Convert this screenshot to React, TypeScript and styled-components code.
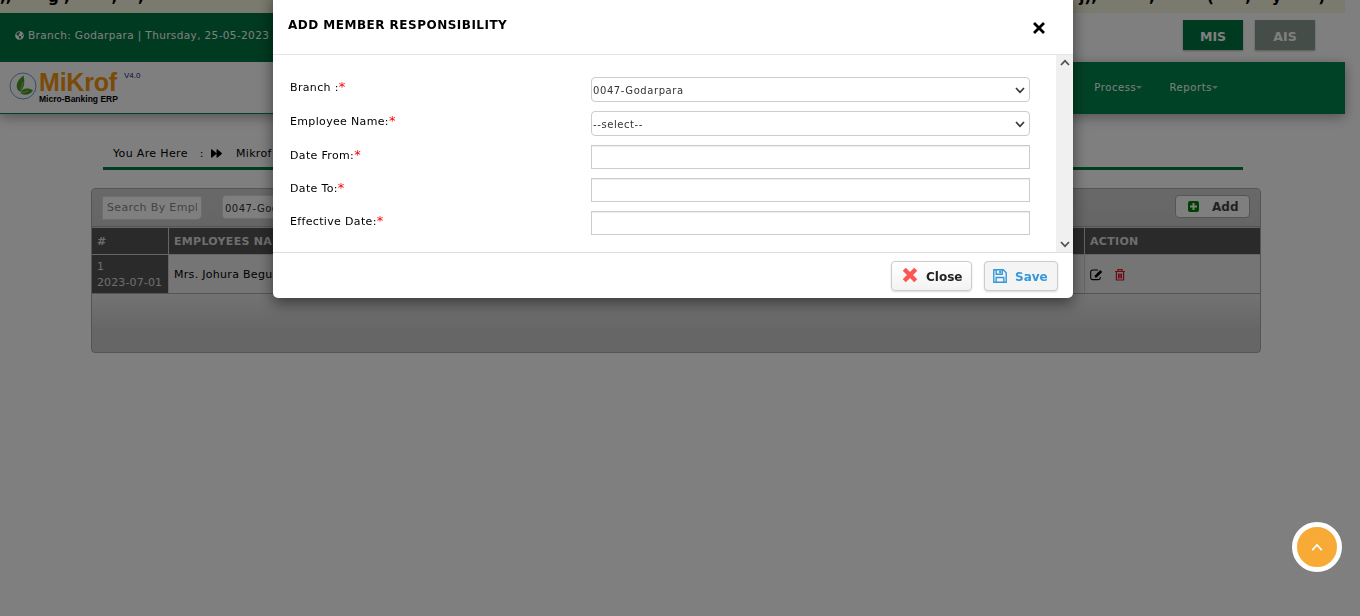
import React from "react";
import styled, { createGlobalStyle } from "styled-components";
import { FaGlobeAmericas, FaForward } from "react-icons/fa";

const Global = createGlobalStyle`
  * { box-sizing: border-box; }
  body { margin: 0; background: #fff; font-family: "DejaVu Sans", Verdana, sans-serif; font-size: 11px; color: #000; overflow: hidden; }
  button, input, select { font-family: inherit; }
`;

const Page = styled.div`height: 616px; padding-right: 15px; overflow: hidden;`;
const Notice = styled.div`
  height: 13px; background: #f5f5dc; overflow: hidden; display: flex; justify-content: space-between;
  font-size: 15px; font-weight: bold; line-height: 18px; white-space: nowrap;
`;
const NoticeText = styled.span<{ $gap?: number }>`
  margin-top: -12px; padding-right: ${p => p.$gap || 0}px; white-space: pre;
`;
const TopBar = styled.div`height: 49px; display: flex; justify-content: space-between;`;
const BranchBar = styled.div`
  width: 420px; background: #007440; color: #fff; display: flex; align-items: center; gap: 4px; padding: 0 0 5px 15px;
  font-size: 10.5px; letter-spacing: .37px; white-space: nowrap;
`;
const Modes = styled.div`display: flex; gap: 12px; padding: 7px 30px 0 0;`;
const Mode = styled.button<{ $muted?: boolean }>`
  width: 60px; height: 30px; padding: 3px 0 0; border: 0; color: #fff; font-size: 12.5px; font-weight: bold;
  background: ${p => (p.$muted ? "#8a9a92" : "#007440")}; box-shadow: 0 1px 2px rgba(0,0,0,.3);
`;
const Header = styled.header`height: 52px; display: flex; justify-content: space-between; border-bottom: 1px solid #008848; box-shadow: 0 3px 12px rgba(0,0,0,.35);`;
const Brand = styled.div`display: flex; padding: 10px 0 0 9px;`;
const BrandWords = styled.div`display: flex; flex-direction: column; gap: 2px; margin-left: 2px; font-family: "Liberation Sans", Arial, sans-serif; font-weight: bold;`;
const BrandName = styled.span`color: #f4940d; font-size: 25px; line-height: 20px; letter-spacing: -.2px; font-weight: bold;`;
const BrandTag = styled.span`font-size: 8.5px; line-height: 10px; white-space: nowrap;`;
const Version = styled.span`font-family: "Liberation Sans", Arial, sans-serif; color: #221a80; font-size: 8px; line-height: 8px; margin-left: 6px;`;
const Nav = styled.nav`
  width: 900px; height: 52px; background: #00844a; display: flex; justify-content: flex-end; align-items: center; gap: 27px; padding: 0 127px 2px 0; color: #fff; font-size: 10px; letter-spacing: .6px;
`;
const NavItem = styled.span`
  display: flex; align-items: center;
  &::after { content: ""; border: 3px solid transparent; border-top-color: #b5c7d8; border-bottom: 0; }
`;
const Crumbs = styled.div`
  margin: 30px 0 0 103px; width: 1140px; height: 26px; padding: 2px 10px 0; border-bottom: 3px solid #007c44;
  display: flex; align-items: flex-start; line-height: 15px; letter-spacing: .35px; white-space: nowrap;
  svg { margin: 2px 14px 0 7px; }
`;
const CrumbColon = styled.span`margin-left: 12px;`;
const Panel = styled.section`margin: 18px 0 0 91px; width: 1170px; height: 165px; border: 1px solid #aaa; border-radius: 4px; background: linear-gradient(#e4e4e4 66%, #ccc 87%); overflow: hidden;`;
const Tools = styled.div`
  height: 38px; background: linear-gradient(#d2d2d2, #cbcbcb); border-bottom: 1px solid #aaa; padding: 6px 10px 0; display: flex; gap: 20px;
`;
const Search = styled.input`
  width: 100px; height: 24px; margin-top: 1px; padding: 0 4px 2px; border: 1px solid #ddd; border-radius: 0 0 5px 0; background: #fff; font-size: 11px; letter-spacing: .35px;
  &::placeholder { color: #888; }
`;
const Filter = styled.div`width: 150px; height: 24px; background: #fff; border: 1px solid #ddd; border-radius: 4px; padding: 1px 2px; font-size: 10px; line-height: 24px; letter-spacing: .5px; color: #333;`;
const AddButton = styled.button`
  margin-left: auto; width: 75px; height: 23px; border: 1px solid #aaa; border-radius: 4px; background: #fff; color: #444; display: flex; align-items: center; gap: 13px; padding: 0 0 0 12px; font-size: 12px; font-weight: bold;
`;
const Grid = styled.div`display: grid; grid-template-columns: 76px 915px 1fr; grid-template-rows: 26px 38px; column-gap: 1px; row-gap: 1px; background: #ccc; border-bottom: 1px solid #aaa; border-top: 1px solid #ccc;`;
const HeadCell = styled.div`background: #555; color: #ddd; padding: 0 5px; font-weight: bold; font-size: 11px; line-height: 27px; letter-spacing: .3px;`;
const Cell = styled.div<{ $dark?: boolean }>`
  background: ${p => (p.$dark ? "#555" : "#ebebeb")}; color: ${p => (p.$dark ? "#ddd" : "#000")};
  padding: 1px 5px 0; display: flex; align-items: center; gap: 12px; line-height: 16px; white-space: nowrap;
  letter-spacing: ${p => (p.$dark ? ".12px" : ".3px")};
`;
const Shade = styled.div`position: fixed; inset: 0; background: rgba(0,0,0,.5);`;
const Dialog = styled.div`
  position: fixed; left: 273px; top: -10px; width: 800px; height: 308px; background: #fff; border-radius: 5px; box-shadow: 0 5px 15px rgba(0,0,0,.5); overflow: hidden;
`;
const DialogHead = styled.div`height: 65px; border-bottom: 1px solid #e5e5e5; padding: 24px 27px 0 15px; display: flex; justify-content: space-between;`;
const Title = styled.h4`margin: 3px 0 0; font-size: 12px; line-height: 16px; letter-spacing: .49px;`;
const Dismiss = styled.button`width: 14px; height: 14px; margin-top: 7px; border: 0; padding: 0; background: none; display: flex;`;
const DialogBody = styled.div`height: 197px; display: flex; justify-content: space-between;`;
const Form = styled.div`width: 757px; padding: 22px 0 0 17px; display: flex; flex-direction: column; gap: 9px;`;
const Row = styled.div`display: flex;`;
const Label = styled.label`width: 301px; line-height: 22px; letter-spacing: .34px; i { color: red; font-style: normal; font-size: 13px; line-height: 1; }`;
const Select = styled.div`
  width: 439px; height: 25px; border: 1px solid #ccc; border-radius: 4px; display: flex; align-items: center; justify-content: space-between; padding: 1px 4px 0 1px; color: #333; font-size: 10px; letter-spacing: .58px;
`;
const Input = styled.input`width: 439px; height: 24px; border: 1px solid #ccc; box-shadow: inset 0 1px 1px rgba(0,0,0,.075);`;
const Scroll = styled.div`width: 17px; background: #f0f0f0; display: flex; flex-direction: column; align-items: center; justify-content: space-between; padding: 4px 0;`;
const DialogFoot = styled.div`height: 46px; border-top: 1px solid #ddd; display: flex; justify-content: flex-end; gap: 12px; padding: 8px 15px 0;`;
const FootButton = styled.button<{ $save?: boolean }>`
  width: ${p => (p.$save ? 74 : 81)}px; height: 30px; border: 1px solid #ccc; border-radius: 4px; box-shadow: 0 1px 2px rgba(0,0,0,.15);
  background: ${p => (p.$save ? "#f4f4f4" : "linear-gradient(#fff, #f3f3f3)")}; color: ${p => (p.$save ? "#3498db" : "#222")};
  display: flex; align-items: center; gap: 8px; padding: ${p => (p.$save ? "0 0 0 8px" : "0 0 0 10px")}; font-size: 12px; font-weight: bold;
  svg { margin-top: ${p => (p.$save ? "0" : "-3px")}; }
  span { margin-top: ${p => (p.$save ? "2px" : "1px")}; }
`;
const ToTop = styled.button`
  position: fixed; left: 1292px; top: 522px; width: 50px; height: 50px; border: 5px solid #fff; border-radius: 50%; background: #f7ab36; padding: 0; display: grid; place-items: center;
`;

const Chevron = ({ up, color = "#333", size = 10, stroke = 1.6 }: { up?: boolean; color?: string; size?: number; stroke?: number }) => (
  <svg width={size} height={size * 0.7} viewBox="0 0 10 7" fill="none" stroke={color} strokeWidth={stroke}>
    <path d={up ? "M1 6 5 1.7 9 6" : "M1 1 5 5.3 9 1"} />
  </svg>
);
const Leaf = () => (
  <svg width="28" height="28" viewBox="0 0 28 28">
    <circle cx="14" cy="14" r="13" fill="#fff" stroke="#6aa2c8" />
    <path d="M11.5 20C5.5 17 6.500 9 14.500 3.500 16 10 15.500 15 11.500 20Z" fill="#4b9b28" />
    <path d="M11.500 21.500c1-5 7-6.500 12.500-3-3.500 5-8 5-12.500 3Z" fill="#4b9b28" />
    <path d="m11.500 20 2.500-10M12 21l7-2" stroke="#c4dfae" strokeWidth=".6" fill="none" />
  </svg>
);
const Plus = () => (
  <svg width="11" height="11" viewBox="0 0 11 11">
    <rect width="11" height="11" rx="2" fill="#008000" />
    <path d="M5.5 2v7M2 5.5h7" stroke="#fff" strokeWidth="2" />
  </svg>
);
const Edit = () => (
  <svg width="13" height="12" viewBox="0 0 13 12" fill="none" stroke="#000">
    <path d="M8 1H2.5A1.8 1.8 0 0 0 .7 2.800v6a1.8 1.8 0 0 0 1.8 1.800h6a1.8 1.8 0 0 0 1.800-1.800V8" strokeWidth="1.100" />
    <path d="M4.800 8.600V6.500L10.300.900l2 2-5.600 5.700Z" fill="#000" stroke="none" />
  </svg>
);
const Trash = () => (
  <svg width="10" height="12" viewBox="0 0 10 12" fill="none" stroke="#dc1428" strokeWidth="1.2">
    <path d="M0 2.500h10M3 2.500V.700h4v1.800M1.400 2.500v8.500h7.200V2.500M3.500 4.500v5M5 4.500v5M6.500 4.500v5" />
  </svg>
);
const Cross = ({ color, size, stroke }: { color: string; size: number; stroke: number }) => (
  <svg width={size} height={size} viewBox="0 0 14 14" stroke={color} strokeWidth={stroke}>
    <path d="m2 2 10 10M12 2 2 12" />
  </svg>
);
const Disk = () => (
  <svg width="14" height="14" viewBox="0 0 14 14" fill="none" stroke="#3498db" strokeWidth="1.4">
    <path d="M.8.8h9.400l3 3v9.400H.8ZM3.200 13V8.500h7.600V13M3.200 1v4.200h6V1" />
    <path d="M6.200 1.500h1.700v2.800H6.200Z" fill="#3498db" stroke="none" />
  </svg>
);

export default function App() {
  return (
    <>
      <Global />
      <Page>
        <Notice>
          <NoticeText>{",,       g ,        ,    ,"}</NoticeText>
          <NoticeText $gap={20}>{"j),          ,          (      ,    y       )"}</NoticeText>
        </Notice>
        <TopBar>
          <BranchBar><FaGlobeAmericas size={9} />Branch: Godarpara | Thursday, 25-05-2023</BranchBar>
          <Modes><Mode>MIS</Mode><Mode $muted>AIS</Mode></Modes>
        </TopBar>
        <Header>
          <Brand>
            <Leaf />
            <BrandWords><BrandName>MiKrof</BrandName><BrandTag>Micro-Banking ERP</BrandTag></BrandWords>
            <Version>V4.0</Version>
          </Brand>
          <Nav><NavItem>Process</NavItem><NavItem>Reports</NavItem></Nav>
        </Header>
        <Crumbs>You Are Here<CrumbColon>:</CrumbColon><FaForward size={11} />Mikrof</Crumbs>
        <Panel>
          <Tools>
            <Search placeholder="Search By Employee" />
            <Filter>0047-Godarpara</Filter>
            <AddButton><Plus />Add</AddButton>
          </Tools>
          <Grid>
            <HeadCell>#</HeadCell><HeadCell>EMPLOYEES NAME</HeadCell><HeadCell>ACTION</HeadCell>
            <Cell $dark>1<br />2023-07-01</Cell><Cell>Mrs. Johura Begum</Cell><Cell><Edit /><Trash /></Cell>
          </Grid>
        </Panel>
      </Page>
      <Shade />
      <Dialog role="dialog">
        <DialogHead>
          <Title>ADD MEMBER RESPONSIBILITY</Title>
          <Dismiss aria-label="Dismiss"><Cross color="#000" size={14} stroke={2.8} /></Dismiss>
        </DialogHead>
        <DialogBody>
          <Form>
            <Row><Label>Branch :<i>*</i></Label><Select>0047-Godarpara<Chevron /></Select></Row>
            <Row><Label>Employee Name:<i>*</i></Label><Select>--select--<Chevron /></Select></Row>
            <Row><Label>Date From:<i>*</i></Label><Input /></Row>
            <Row><Label>Date To:<i>*</i></Label><Input /></Row>
            <Row><Label>Effective Date:<i>*</i></Label><Input /></Row>
          </Form>
          <Scroll><Chevron up color="#505050" stroke={1.8} /><Chevron color="#505050" stroke={1.8} /></Scroll>
        </DialogBody>
        <DialogFoot>
          <FootButton><Cross color="#ff5454" size={16} stroke={3.8} /><span>Close</span></FootButton>
          <FootButton $save><Disk /><span>Save</span></FootButton>
        </DialogFoot>
      </Dialog>
      <ToTop aria-label="Back to top"><Chevron up color="#fff" size={12} stroke={1.4} /></ToTop>
    </>
  );
}
